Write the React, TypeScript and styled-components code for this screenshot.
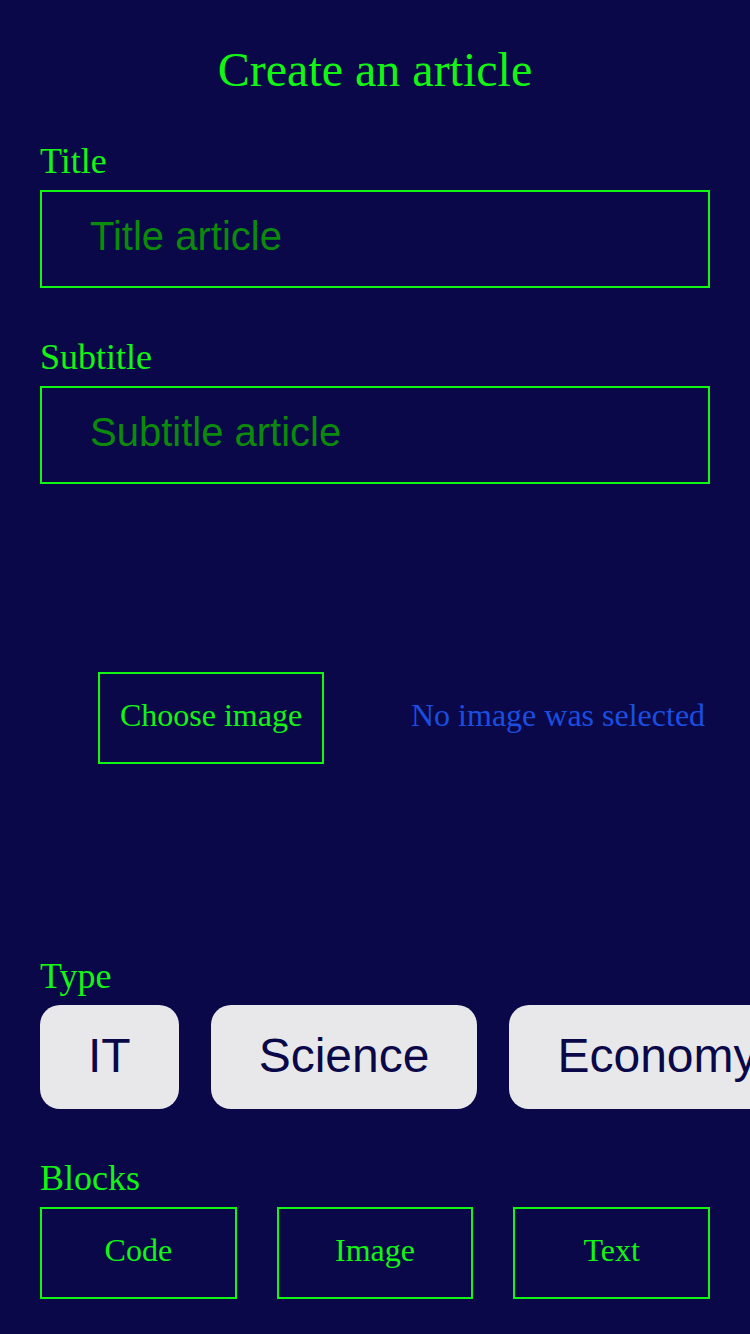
import React from "react";
import styled, { createGlobalStyle } from "styled-components";

const GREEN = "#13f513";
const NAVY = "#0a0849";

const Global = createGlobalStyle`
  html, body {
    margin: 0;
    padding: 0;
    background: ${NAVY};
    overflow-x: hidden;
  }
  * { box-sizing: border-box; }
`;

const Page = styled.div`
  width: 750px;
  min-height: 1334px;
  background: ${NAVY};
  padding: 40px 40px 0 40px;
  font-family: "Liberation Serif", "Times New Roman", serif;
  color: ${GREEN};
  overflow: hidden;
`;

const Heading = styled.h1`
  margin: 0 0 40px;
  text-align: center;
  font-weight: 400;
  font-size: 48px;
  line-height: 60px;
`;

const Field = styled.div<{ $mb?: number }>`
  display: flex;
  flex-direction: column;
  margin-bottom: ${(p) => p.$mb ?? 0}px;
`;

const Label = styled.label`
  font-size: 36px;
  line-height: 42px;
  margin-bottom: 8px;
`;

const Input = styled.input`
  height: 98px;
  width: 100%;
  border: 2px solid ${GREEN};
  background: transparent;
  padding: 0 48px 6px;
  font-family: "Liberation Sans", Arial, sans-serif;
  font-size: 40px;
  color: ${GREEN};
  outline: none;
  &::placeholder {
    color: #0b8a0b;
    opacity: 1;
  }
`;

const ImageSection = styled.div`
  height: 471px;
  display: flex;
  align-items: center;
  padding-left: 58px;
  padding-bottom: 3px;
  gap: 87px;
`;

const OutlineButton = styled.button`
  border: 2px solid ${GREEN};
  background: transparent;
  color: ${GREEN};
  font-family: "Liberation Serif", "Times New Roman", serif;
  font-size: 32px;
  padding: 0 0 6px;
  cursor: pointer;
`;

const ChooseButton = styled(OutlineButton)`
  width: 226px;
  height: 92px;
`;

const NoImage = styled.span`
  font-size: 32px;
  color: #1a4ee0;
  white-space: nowrap;
  margin-bottom: 6px;
`;

const ChipRow = styled.div`
  display: flex;
  gap: 32px;
  flex-wrap: nowrap;
  margin-top: 0;
  margin-right: -80px;
`;

const Chip = styled.button`
  flex: none;
  height: 104px;
  padding: 0 48px 4px;
  border: none;
  border-radius: 20px;
  background: #e8e8ea;
  color: ${NAVY};
  font-family: "Liberation Sans", Arial, sans-serif;
  font-size: 48px;
  white-space: nowrap;
`;

const BlockRow = styled.div`
  display: flex;
  gap: 40px;
  margin-top: 0;
`;

const BlockButton = styled(OutlineButton)`
  flex: 1;
  height: 92px;
`;

export default function App() {
  return (
    <>
      <Global />
      <Page>
        <Heading>Create an article</Heading>
        <Field $mb={48}>
          <Label>Title</Label>
          <Input placeholder="Title article" />
        </Field>
        <Field>
          <Label>Subtitle</Label>
          <Input placeholder="Subtitle article" />
        </Field>
        <ImageSection>
          <ChooseButton>Choose image</ChooseButton>
          <NoImage>No image was selected</NoImage>
        </ImageSection>
        <Field $mb={48}>
          <Label>Type</Label>
          <ChipRow>
            {["IT", "Science", "Economy"].map((t) => (
              <Chip key={t}>{t}</Chip>
            ))}
          </ChipRow>
        </Field>
        <Field>
          <Label>Blocks</Label>
          <BlockRow>
            {["Code", "Image", "Text"].map((t) => (
              <BlockButton key={t}>{t}</BlockButton>
            ))}
          </BlockRow>
        </Field>
      </Page>
    </>
  );
}
